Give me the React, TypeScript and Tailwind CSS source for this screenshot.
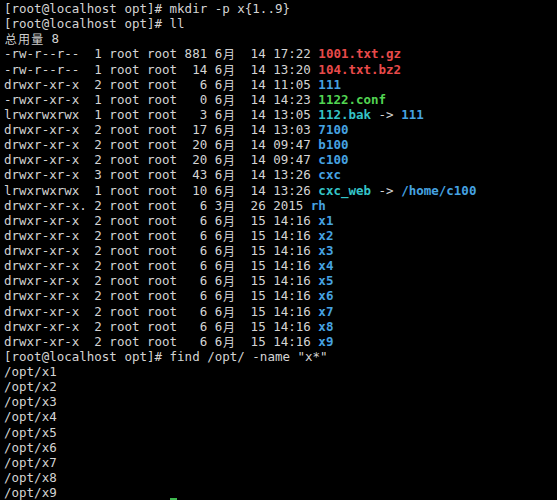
import React from "react";

type Seg = { t: string; c?: string };

const W = "text-[#d4d4d4]";
const RED = "text-[#e84a4a] font-bold";
const BLUE = "text-[#46a3e2] font-bold";
const GREEN = "text-[#52d452] font-bold";
const CYAN = "text-[#34c4c8] font-bold";

function Cjk({ ch }: { ch: string }) {
  return (
    <span
      className="inline-block w-[2ch] align-top text-center text-[12px] leading-[15.125px] text-[#cfcfcf]"
      style={{ fontFamily: '"Noto Sans CJK SC", sans-serif' }}
    >
      {ch}
    </span>
  );
}

function renderText(t: string) {
  const parts: React.ReactNode[] = [];
  let buf = "";
  let k = 0;
  for (const ch of t) {
    if (/[\u4e00-\u9fff]/.test(ch)) {
      if (buf) parts.push(<span key={k++}>{buf}</span>);
      buf = "";
      parts.push(<Cjk key={k++} ch={ch} />);
    } else buf += ch;
  }
  if (buf) parts.push(<span key={k++}>{buf}</span>);
  return parts;
}

const P = "[root@localhost opt]# ";

const lines: Seg[][] = [
  [{ t: P + "mkdir -p x{1..9}" }],
  [{ t: P + "ll" }],
  [{ t: "总用量 8" }],
  [{ t: "-rw-r--r--  1 root root 881 6月  14 17:22 " }, { t: "1001.txt.gz", c: RED }],
  [{ t: "-rw-r--r--  1 root root  14 6月  14 13:20 " }, { t: "104.txt.bz2", c: RED }],
  [{ t: "drwxr-xr-x  2 root root   6 6月  14 11:05 " }, { t: "111", c: BLUE }],
  [{ t: "-rwxr-xr-x  1 root root   0 6月  14 14:23 " }, { t: "1122.conf", c: GREEN }],
  [
    { t: "lrwxrwxrwx  1 root root   3 6月  14 13:05 " },
    { t: "112.bak", c: CYAN },
    { t: " -> " },
    { t: "111", c: BLUE },
  ],
  [{ t: "drwxr-xr-x  2 root root  17 6月  14 13:03 " }, { t: "7100", c: BLUE }],
  [{ t: "drwxr-xr-x  2 root root  20 6月  14 09:47 " }, { t: "b100", c: BLUE }],
  [{ t: "drwxr-xr-x  2 root root  20 6月  14 09:47 " }, { t: "c100", c: BLUE }],
  [{ t: "drwxr-xr-x  3 root root  43 6月  14 13:26 " }, { t: "cxc", c: BLUE }],
  [
    { t: "lrwxrwxrwx  1 root root  10 6月  14 13:26 " },
    { t: "cxc_web", c: CYAN },
    { t: " -> " },
    { t: "/home/c100", c: BLUE },
  ],
  [{ t: "drwxr-xr-x. 2 root root   6 3月  26 2015 " }, { t: "rh", c: BLUE }],
  ...[1, 2, 3, 4, 5, 6, 7, 8, 9].map((n) => [
    { t: "drwxr-xr-x  2 root root   6 6月  15 14:16 " },
    { t: "x" + n, c: BLUE },
  ]),
  [{ t: P + 'find /opt/ -name "x*"' }],
  ...[1, 2, 3, 4, 5, 6, 7, 8, 9].map((n) => [{ t: "/opt/x" + n }]),
];

export default function App() {
  return (
    <div
      className="w-[557px] h-[500px] overflow-hidden bg-black pl-[4px] pt-[1px] text-[12.5px] leading-[15.125px]"
      style={{ fontFamily: '"DejaVu Sans Mono", "Liberation Mono", monospace' }}
    >
      {lines.map((segs, i) => (
        <div key={i} className={`whitespace-pre h-[15.125px] ${W}`}>
          {segs.map((s, j) => (
            <span key={j} className={s.c ?? ""}>
              {renderText(s.t)}
            </span>
          ))}
        </div>
      ))}
      <div className={`whitespace-pre h-[15.125px] ${W} flex items-start`}>
        <span>{P}</span>
        <span className="inline-block w-[7px] h-[12px] -mt-[2px] bg-[#3fb950]" />
      </div>
    </div>
  );
}
